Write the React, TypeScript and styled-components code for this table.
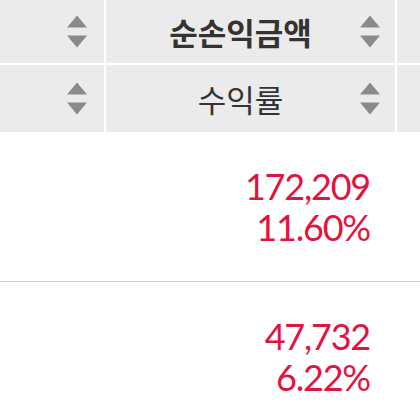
import styled, { createGlobalStyle } from "styled-components";

const GlobalStyle = createGlobalStyle`
  html, body {
    margin: 0;
    padding: 0;
    background: #ffffff;
  }
`;

const Table = styled.div`
  width: 420px;
  height: 420px;
  overflow: hidden;
  background: #ffffff;
`;

const HeaderGrid = styled.div`
  display: grid;
  grid-template-columns: 104px 289px 1fr;
  grid-template-rows: 63px 67px;
  column-gap: 2px;
  row-gap: 2px;
  background: #ffffff;
`;

const HeaderCell = styled.div<{ $arrowRight: number }>`
  position: relative;
  background: #ebebeb;
  display: flex;
  align-items: center;
  justify-content: center;
  padding-right: ${(p) => (p.$arrowRight > 0 ? 20 : 0)}px;
  .sort {
    position: absolute;
    right: ${(p) => p.$arrowRight}px;
    top: 50%;
    transform: translateY(-50%);
  }
`;

const HeaderLabel = styled.span<{ $bold?: boolean }>`
  font-family: "Noto Sans CJK KR", "Noto Sans", sans-serif;
  font-size: 31px;
  font-weight: ${(p) => (p.$bold ? 700 : 400)};
  color: #333333;
  line-height: 1;
`;

const DataRow = styled.div`
  display: grid;
  grid-template-columns: 104px 289px 1fr;
  column-gap: 2px;
  height: 149px;
  border-bottom: 1px solid #cccccc;
  align-items: center;
`;

const ValueCell = styled.div`
  grid-column: 2;
  text-align: right;
  padding-right: 25px;
  font-family: Lato, "Liberation Sans", sans-serif;
  font-size: 36px;
  letter-spacing: -1.2px;
  line-height: 41px;
  color: #e2143f;
`;

const SortIcon = () => (
  <svg className="sort" width="20" height="33" viewBox="0 0 20 33">
    <polygon points="10,0 20,12 0,12" fill="#8a8a8a" />
    <polygon points="0,20 20,20 10,32" fill="#8a8a8a" />
  </svg>
);

const rows = [
  { amount: "172,209", rate: "11.60%" },
  { amount: "47,732", rate: "6.22%" },
];

export default function App() {
  return (
    <Table>
      <GlobalStyle />
      <HeaderGrid>
        <HeaderCell $arrowRight={17}>
          <SortIcon />
        </HeaderCell>
        <HeaderCell $arrowRight={15}>
          <HeaderLabel $bold>순손익금액</HeaderLabel>
          <SortIcon />
        </HeaderCell>
        <HeaderCell $arrowRight={0} />
        <HeaderCell $arrowRight={17}>
          <SortIcon />
        </HeaderCell>
        <HeaderCell $arrowRight={15}>
          <HeaderLabel>수익률</HeaderLabel>
          <SortIcon />
        </HeaderCell>
        <HeaderCell $arrowRight={0} />
      </HeaderGrid>
      {rows.map((r) => (
        <DataRow key={r.amount}>
          <ValueCell>
            <div>{r.amount}</div>
            <div>{r.rate}</div>
          </ValueCell>
        </DataRow>
      ))}
    </Table>
  );
}
